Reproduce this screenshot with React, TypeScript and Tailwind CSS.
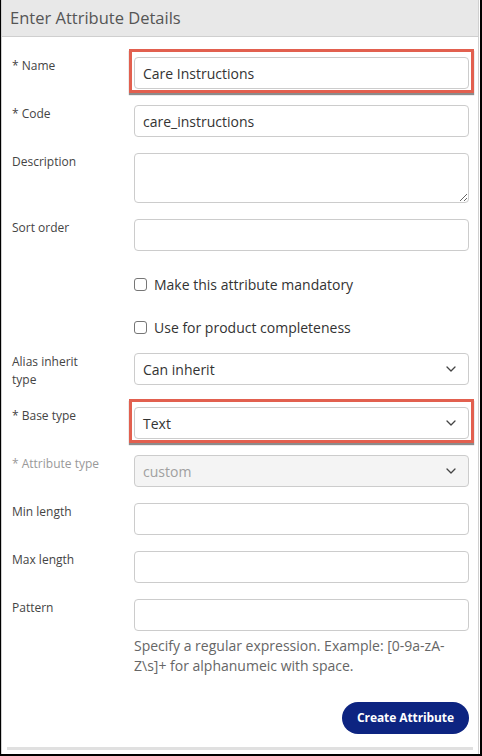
import React from "react";

const font = { fontFamily: '"Open Sans", "Noto Sans", Arial, sans-serif' };

function Chevron() {
  return (
    <svg width="10" height="6" viewBox="0 0 10 6" className="absolute right-[12px] top-1/2 -translate-y-1/2">
      <path d="M1 1l4 4 4-4" fill="none" stroke="#444" strokeWidth="1.3" strokeLinecap="round" strokeLinejoin="round" />
    </svg>
  );
}

function Highlight() {
  return (
    <div className="pointer-events-none absolute left-[-5px] right-[-5px] top-[-8px] bottom-[-4px] border-[3px] border-[#e2604f] shadow-[0_2px_1px_rgba(0,0,0,0.45)]" />
  );
}

function Label({ children, muted }: { children: React.ReactNode; muted?: boolean }) {
  return (
    <div className={`w-[95px] shrink-0 text-[12px] leading-[18px] ${muted ? "text-[#999]" : "text-[#444]"}`}>
      {children}
    </div>
  );
}

function TextRow({
  label,
  value,
  highlight,
  className = "mb-4",
}: {
  label: string;
  value?: string;
  highlight?: boolean;
  className?: string;
}) {
  return (
    <div className={`flex gap-[27px] ${className}`}>
      <Label>{label}</Label>
      <div className="relative flex-1">
        {highlight && <Highlight />}
        <div className="relative h-[32px] rounded-[4px] border border-[#ccc] bg-white flex items-center px-[8px] text-[14px] text-[#333]">
          {value}
        </div>
      </div>
    </div>
  );
}

function SelectRow({
  label,
  value,
  highlight,
  disabled,
  className = "mb-4",
}: {
  label: React.ReactNode;
  value: string;
  highlight?: boolean;
  disabled?: boolean;
  className?: string;
}) {
  return (
    <div className={`flex gap-[27px] ${className}`}>
      <Label muted={disabled}>{label}</Label>
      <div className="relative flex-1">
        {highlight && <Highlight />}
        <div
          className={`relative h-[32px] rounded-[4px] border border-[#ccc] flex items-center px-[8px] text-[14px] ${
            disabled ? "bg-[#f4f4f4] text-[#a0a0a0]" : "bg-white text-[#333]"
          }`}
        >
          {value}
          <Chevron />
        </div>
      </div>
    </div>
  );
}

function CheckRow({ label, className }: { label: string; className: string }) {
  return (
    <div className={`flex items-center h-[20px] pl-[122px] ${className}`}>
      <span className="w-[13px] h-[13px] rounded-[3px] border border-[#767676] bg-white" />
      <span className="ml-[7px] text-[14px] text-[#333]">{label}</span>
    </div>
  );
}

export default function App() {
  return (
    <div style={font} className="w-[482px] h-[756px] bg-white border-l border-r-2 border-b-2 border-black flex flex-col">
      <div className="border-l border-r border-[#d0d0d0] mr-[1px] flex-1 flex flex-col">
        <div className="h-[37px] bg-[#e8e8e8] border-b border-[#cfcfcf] flex items-center pl-[8px] text-[16.5px] text-[#555]">
          Enter Attribute Details
        </div>
        <div className="pl-[10px] pr-[9px] pt-[20px] flex flex-col">
          <TextRow label="* Name" value="Care Instructions" highlight />
          <TextRow label="* Code" value="care_instructions" />
          <div className="flex gap-[27px] mb-4">
            <Label>Description</Label>
            <textarea
              className="flex-1 h-[50px] rounded-[4px] border border-[#ccc] bg-white outline-none"
              readOnly
            />
          </div>
          <TextRow label="Sort order" className="mb-[23px]" />
          <CheckRow label="Make this attribute mandatory" className="mb-[23px]" />
          <CheckRow label="Use for product completeness" className="mb-4" />
          <SelectRow
            label={
              <>
                Alias inherit
                <br />
                type
              </>
            }
            value="Can inherit"
            className="mb-[18px]"
          />
          <SelectRow label="* Base type" value="Text" highlight />
          <SelectRow label="* Attribute type" value="custom" disabled />
          <TextRow label="Min length" />
          <TextRow label="Max length" />
          <TextRow label="Pattern" className="mb-0" />
          <div className="pl-[122px] mt-[5px] text-[14px] leading-[20px] text-[#666]">
            Specify a regular expression. Example: [0-9a-zA-Z\s]+ for alphanumeic with space.
          </div>
          <div className="flex justify-end mt-[26px]">
            <button className="h-[32px] w-[127px] rounded-full bg-[#0d2481] text-white text-[12px] font-bold tracking-[-0.1px]">
              Create Attribute
            </button>
          </div>
        </div>
        <div className="mt-[13px] mx-[5px] h-[3px] bg-[#e0e0e0]" />
      </div>
    </div>
  );
}
